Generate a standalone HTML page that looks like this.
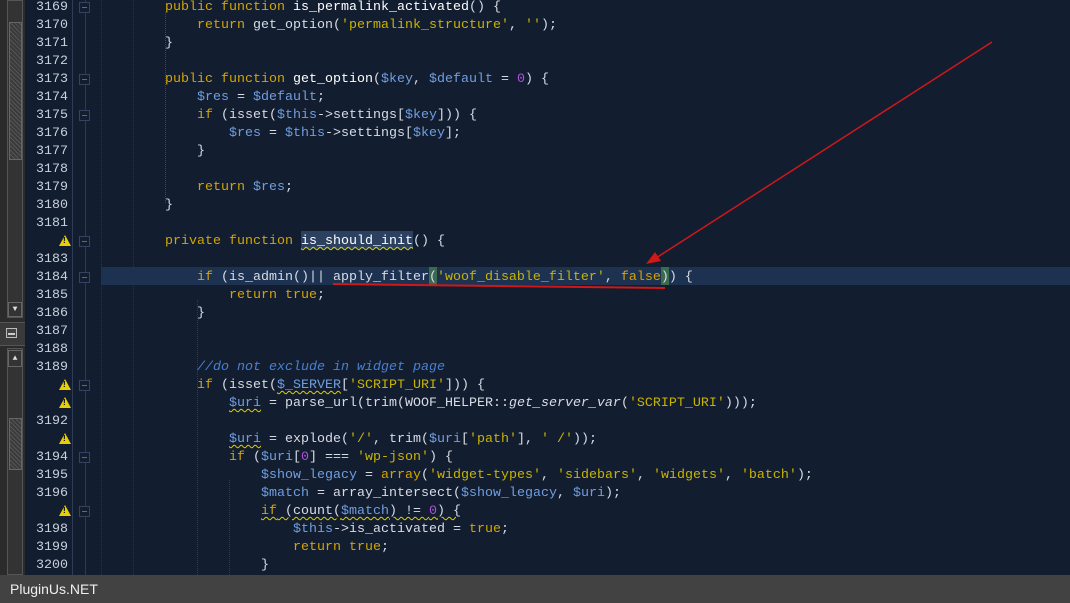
<!DOCTYPE html>
<html><head><meta charset="utf-8"><style>
*{margin:0;padding:0;box-sizing:border-box}
body{width:1070px;height:603px;overflow:hidden;background:#131d30;position:relative;font-family:"Liberation Mono",monospace;font-size:13.33px}
.ln{position:absolute;left:30px;width:38px;text-align:right;color:#c8d0dc;height:18px;line-height:18px;margin-top:2px}
.c{position:absolute;white-space:pre;height:18px;line-height:18px;color:#d8dce4;margin-top:2px}
.k{color:#d4a400}.v{color:#6f9fe0}.s{color:#c8b400}.n{color:#b050e0}.cm{color:#4a80d0;font-style:italic}
.w{text-decoration:underline wavy #e0d000;text-decoration-thickness:1px;text-underline-offset:2px}
.fold{position:absolute;left:79px;width:11px;height:11px;border:1px solid #34435e;background:#131d30;margin-top:1px}
.fold:after{content:"";position:absolute;left:2px;top:4px;width:5px;height:1px;background:#5a6a86}
.warn{position:absolute;left:59px;width:0;height:0;border-left:6px solid transparent;border-right:6px solid transparent;border-bottom:11px solid #e8d000;margin-top:1px}
.warn:after{content:"!";position:absolute;left:-2px;top:1px;font:bold 8px "Liberation Sans",sans-serif;color:#000}
.g{position:absolute;top:0;bottom:28px;width:0;border-left:1px dotted #26344e}
</style></head><body>
<div style="position:absolute;left:0;top:0;width:25px;height:575px;background:#2b2b2b"></div>
<div style="position:absolute;left:7px;top:0;width:16px;height:318px;background:#333;border:1px solid #555"></div>
<div style="position:absolute;left:9px;top:22px;width:13px;height:138px;background:repeating-linear-gradient(45deg,#555 0 1px,#3a3a3a 1px 3px);border:1px solid #666"></div>
<div style="position:absolute;left:8px;top:302px;width:14px;height:15px;background:#333;border:1px solid #666;color:#ddd;font-size:8px;text-align:center;line-height:13px">▼</div>
<div style="position:absolute;left:0;top:322px;width:25px;height:24px;background:#3a3a3a;border-top:1px solid #555;border-bottom:1px solid #555"></div>
<div style="position:absolute;left:6px;top:328px;width:11px;height:10px;border:1px solid #bbb;background:#444"><div style="margin:4px 1px 0;height:2px;background:#ccc"></div></div>
<div style="position:absolute;left:7px;top:348px;width:16px;height:227px;background:#333;border:1px solid #555"></div>
<div style="position:absolute;left:8px;top:350px;width:14px;height:17px;background:#333;border:1px solid #666;color:#ddd;font-size:8px;text-align:center;line-height:15px">▲</div>
<div style="position:absolute;left:9px;top:418px;width:13px;height:52px;background:repeating-linear-gradient(45deg,#555 0 1px,#3a3a3a 1px 3px);border:1px solid #666"></div>
<div style="position:absolute;left:72px;top:0;width:1px;height:575px;background:#2e3c56"></div>
<div style="position:absolute;left:85px;top:0;width:1px;height:575px;background:#2a3a56"></div>
<div class="g" style="left:101px"></div><div class="g" style="left:133px"></div><div class="g" style="left:165px;top:12px;bottom:400px;border-color:#3a4860"></div><div class="g" style="left:197px;top:300px;border-color:#2e3c56"></div><div class="g" style="left:229px;top:480px;border-color:#2e3c56"></div>
<div style="position:absolute;left:101px;top:267px;width:969px;height:18px;background:#1d3150"></div>
<div style="position:absolute;left:301px;top:231px;width:112px;height:18px;background:#2c4160"></div>
<div style="position:absolute;left:429px;top:267px;width:8px;height:18px;background:#3a6a50"></div>
<div style="position:absolute;left:661px;top:267px;width:8px;height:18px;background:#3a6a50"></div>

<div class="ln" style="top:-3px">3169</div><div class="fold" style="top:1px"></div><div class="c" style="left:165px;top:-3px"><span class="k">public function </span><b style="font-weight:normal;color:#fff">is_permalink_activated</b>() {</div>
<div class="ln" style="top:15px">3170</div><div class="c" style="left:197px;top:15px"><span class="k">return </span>get_option(<span class="s">'permalink_structure'</span>, <span class="s">''</span>);</div>
<div class="ln" style="top:33px">3171</div><div class="c" style="left:165px;top:33px">}</div>
<div class="ln" style="top:51px">3172</div>
<div class="ln" style="top:69px">3173</div><div class="fold" style="top:73px"></div><div class="c" style="left:165px;top:69px"><span class="k">public function </span><span style="color:#fff">get_option</span>(<span class="v">$key</span>, <span class="v">$default</span> = <span class="n">0</span>) {</div>
<div class="ln" style="top:87px">3174</div><div class="c" style="left:197px;top:87px"><span class="v">$res</span> = <span class="v">$default</span>;</div>
<div class="ln" style="top:105px">3175</div><div class="fold" style="top:109px"></div><div class="c" style="left:197px;top:105px"><span class="k">if</span> (isset(<span class="v">$this</span>-&gt;settings[<span class="v">$key</span>])) {</div>
<div class="ln" style="top:123px">3176</div><div class="c" style="left:229px;top:123px"><span class="v">$res</span> = <span class="v">$this</span>-&gt;settings[<span class="v">$key</span>];</div>
<div class="ln" style="top:141px">3177</div><div class="c" style="left:197px;top:141px">}</div>
<div class="ln" style="top:159px">3178</div>
<div class="ln" style="top:177px">3179</div><div class="c" style="left:197px;top:177px"><span class="k">return </span><span class="v">$res</span>;</div>
<div class="ln" style="top:195px">3180</div><div class="c" style="left:165px;top:195px">}</div>
<div class="ln" style="top:213px">3181</div>
<div class="warn" style="top:234px"></div><div class="fold" style="top:235px"></div><div class="c" style="left:165px;top:231px"><span class="k">private function </span><span class="w" style="color:#fff">is_should_init</span>() {</div>
<div class="ln" style="top:249px">3183</div>
<div class="ln" style="top:267px">3184</div><div class="fold" style="top:271px"></div><div class="c" style="left:197px;top:267px"><span class="k">if</span> (is_admin()|| apply_filter(<span class="s">'woof_disable_filter'</span>, <span class="k">false</span>)) {</div>
<div class="ln" style="top:285px">3185</div><div class="c" style="left:229px;top:285px"><span class="k">return true</span>;</div>
<div class="ln" style="top:303px">3186</div><div class="c" style="left:197px;top:303px">}</div>
<div class="ln" style="top:321px">3187</div>
<div class="ln" style="top:339px">3188</div>
<div class="ln" style="top:357px">3189</div><div class="c" style="left:197px;top:357px"><span class="cm">//do not exclude in widget page</span></div>
<div class="warn" style="top:378px"></div><div class="fold" style="top:379px"></div><div class="c" style="left:197px;top:375px"><span class="k">if</span> (isset(<span class="v w">$_SERVER</span>[<span class="s">'SCRIPT_URI'</span>])) {</div>
<div class="warn" style="top:396px"></div><div class="c" style="left:229px;top:393px"><span class="v w">$uri</span> = parse_url(trim(WOOF_HELPER::<i>get_server_var</i>(<span class="s">'SCRIPT_URI'</span>)));</div>
<div class="ln" style="top:411px">3192</div>
<div class="warn" style="top:432px"></div><div class="c" style="left:229px;top:429px"><span class="v w">$uri</span> = explode(<span class="s">'/'</span>, trim(<span class="v">$uri</span>[<span class="s">'path'</span>], <span class="s">' /'</span>));</div>
<div class="ln" style="top:447px">3194</div><div class="fold" style="top:451px"></div><div class="c" style="left:229px;top:447px"><span class="k">if</span> (<span class="v">$uri</span>[<span class="n">0</span>] === <span class="s">'wp-json'</span>) {</div>
<div class="ln" style="top:465px">3195</div><div class="c" style="left:261px;top:465px"><span class="v">$show_legacy</span> = <span class="k">array</span>(<span class="s">'widget-types'</span>, <span class="s">'sidebars'</span>, <span class="s">'widgets'</span>, <span class="s">'batch'</span>);</div>
<div class="ln" style="top:483px">3196</div><div class="c" style="left:261px;top:483px"><span class="v">$match</span> = array_intersect(<span class="v">$show_legacy</span>, <span class="v">$uri</span>);</div>
<div class="warn" style="top:504px"></div><div class="fold" style="top:505px"></div><div class="c" style="left:261px;top:501px"><span class="w"><span class="k">if</span> (count(<span class="v">$match</span>) != <span class="n">0</span>) {</span></div>
<div class="ln" style="top:519px">3198</div><div class="c" style="left:293px;top:519px"><span class="v">$this</span>-&gt;is_activated = <span class="k">true</span>;</div>
<div class="ln" style="top:537px">3199</div><div class="c" style="left:293px;top:537px"><span class="k">return true</span>;</div>
<div class="ln" style="top:555px">3200</div><div class="c" style="left:261px;top:555px">}</div>

<svg style="position:absolute;left:0;top:0" width="1070" height="603">
<line x1="333" y1="284" x2="665" y2="288" stroke="#d01818" stroke-width="2"/>
<line x1="992" y1="42" x2="656" y2="258" stroke="#d01818" stroke-width="1.5"/>
<polygon points="646,264 655,252 661,261" fill="#d01818"/>
</svg>
<div style="position:absolute;left:0;top:575px;width:1070px;height:28px;background:#424242;color:#eee;font:14px 'Liberation Sans',sans-serif;line-height:28px;padding-left:10px">PluginUs.NET</div>
</body></html>
